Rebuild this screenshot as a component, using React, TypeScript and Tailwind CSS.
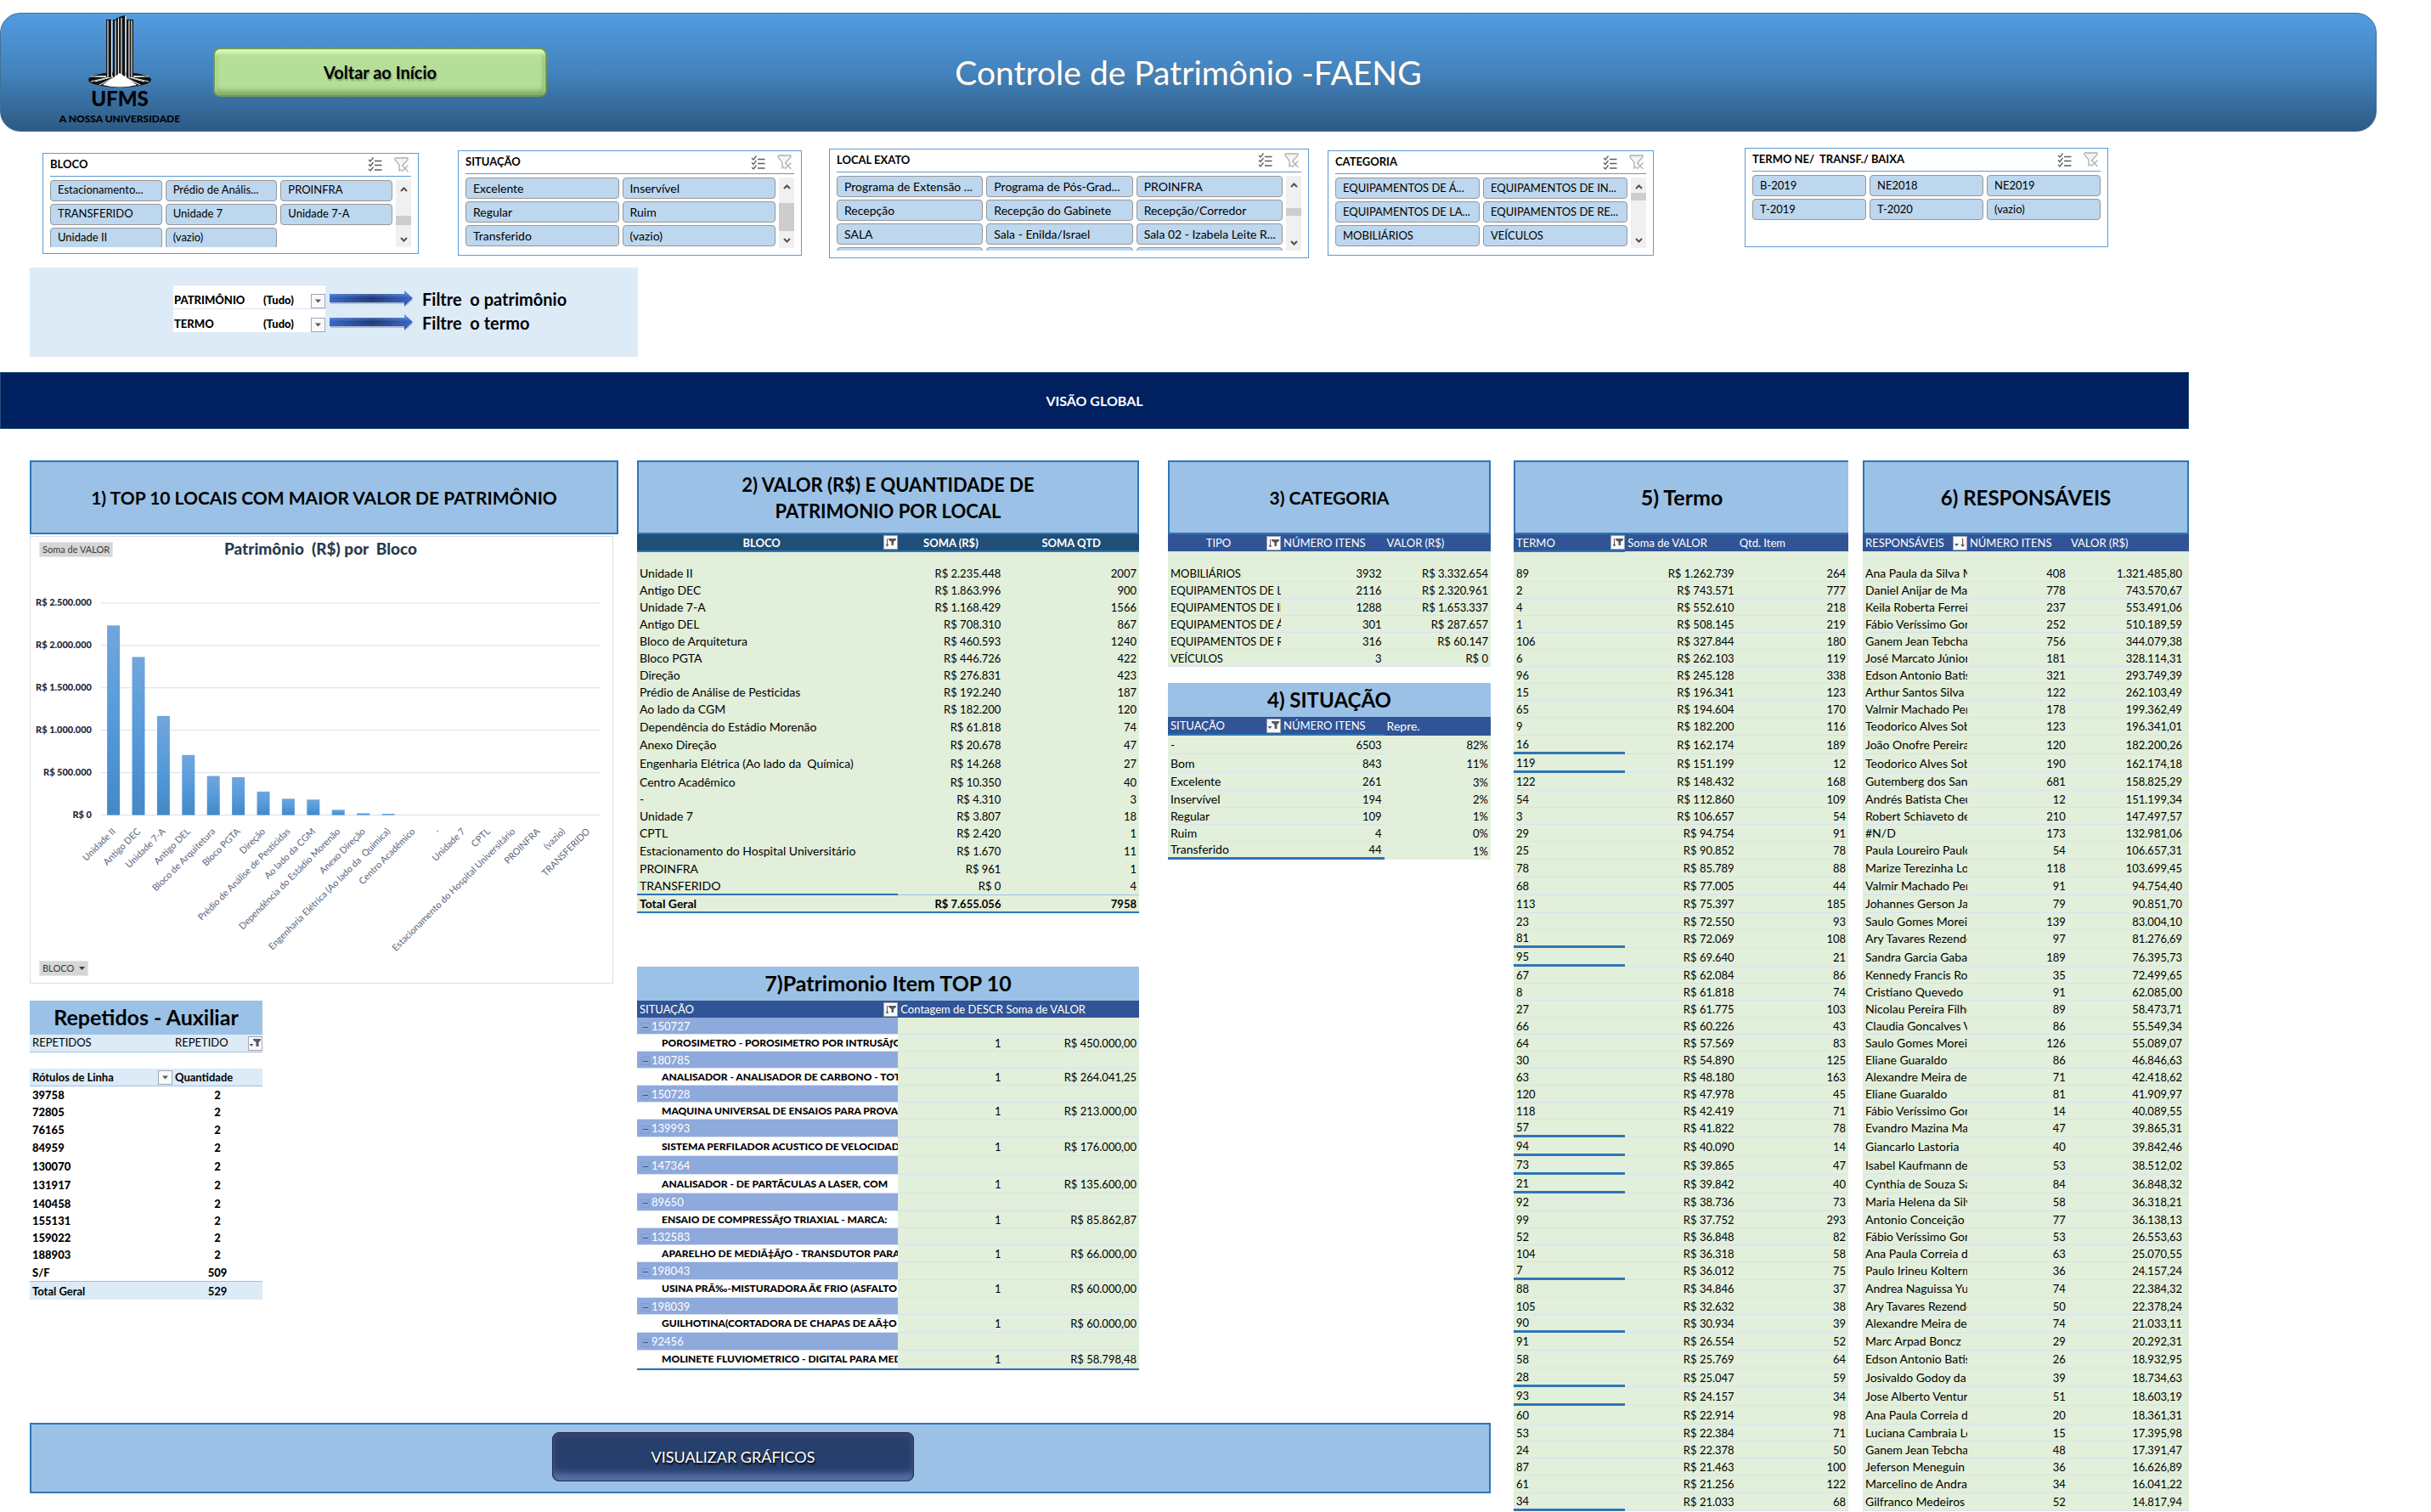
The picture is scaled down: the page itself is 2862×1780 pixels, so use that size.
import React from "react";

const heights: Record<number, string> = {
  15: "h-[15px]",
  20: "h-5",
  21: "h-[21px]",
  22: "h-[22px]",
};

const sheetRows = [
  20, 20, 20, 20, 20, 20, 20, 20, 20, 21, 22, 22, 21, 20, 20, 20, 21, 21, 21, 21, 20, 21, 22, 20, 20, 20, 20, 20, 20,
  20, 20, 20, 21, 22, 22, 22, 21, 20, 20, 20, 21, 21, 20, 21, 21, 21, 22, 22, 22, 20, 20, 20, 21, 21,
];

const blocos: [string, string, string][] = [
  ["Unidade II", "R$ 2.235.448", "2007"],
  ["Antigo DEC", "R$ 1.863.996", "900"],
  ["Unidade 7-A", "R$ 1.168.429", "1566"],
  ["Antigo DEL", "R$ 708.310", "867"],
  ["Bloco de Arquitetura", "R$ 460.593", "1240"],
  ["Bloco PGTA", "R$ 446.726", "422"],
  ["Direção", "R$ 276.831", "423"],
  ["Prédio de Análise de Pesticidas", "R$ 192.240", "187"],
  ["Ao lado da CGM", "R$ 182.200", "120"],
  ["Dependência do Estádio Morenão", "R$ 61.818", "74"],
  ["Anexo Direção", "R$ 20.678", "47"],
  ["Engenharia Elétrica (Ao lado da  Química)", "R$ 14.268", "27"],
  ["Centro Acadêmico", "R$ 10.350", "40"],
  ["-", "R$ 4.310", "3"],
  ["Unidade 7", "R$ 3.807", "18"],
  ["CPTL", "R$ 2.420", "1"],
  ["Estacionamento do Hospital Universitário", "R$ 1.670", "11"],
  ["PROINFRA", "R$ 961", "1"],
  ["TRANSFERIDO", "R$ 0", "4"],
];

const categorias: [string, string, string][] = [
  ["MOBILIÁRIOS", "3932", "R$ 3.332.654"],
  ["EQUIPAMENTOS DE LABORATÓRIO", "2116", "R$ 2.320.961"],
  ["EQUIPAMENTOS DE INFORMÁTICA", "1288", "R$ 1.653.337"],
  ["EQUIPAMENTOS DE ÁUDIO", "301", "R$ 287.657"],
  ["EQUIPAMENTOS DE REFRIGERAÇÃO", "316", "R$ 60.147"],
  ["VEÍCULOS", "3", "R$ 0"],
];

const situacoes: [string, string, string][] = [
  ["-", "6503", "82%"],
  ["Bom", "843", "11%"],
  ["Excelente", "261", "3%"],
  ["Inservível", "194", "2%"],
  ["Regular", "109", "1%"],
  ["Ruim", "4", "0%"],
  ["Transferido", "44", "1%"],
];

const termos: [string, string, string][] = [
  ["89", "1.262.739", "264"], ["2", "743.571", "777"], ["4", "552.610", "218"], ["1", "508.145", "219"],
  ["106", "327.844", "180"], ["6", "262.103", "119"], ["96", "245.128", "338"], ["15", "196.341", "123"],
  ["65", "194.604", "170"], ["9", "182.200", "116"], ["16", "162.174", "189"], ["119", "151.199", "12"],
  ["122", "148.432", "168"], ["54", "112.860", "109"], ["3", "106.657", "54"], ["29", "94.754", "91"],
  ["25", "90.852", "78"], ["78", "85.789", "88"], ["68", "77.005", "44"], ["113", "75.397", "185"],
  ["23", "72.550", "93"], ["81", "72.069", "108"], ["95", "69.640", "21"], ["67", "62.084", "86"],
  ["8", "61.818", "74"], ["27", "61.775", "103"], ["66", "60.226", "43"], ["64", "57.569", "83"],
  ["30", "54.890", "125"], ["63", "48.180", "163"], ["120", "47.978", "45"], ["118", "42.419", "71"],
  ["57", "41.822", "78"], ["94", "40.090", "14"], ["73", "39.865", "47"], ["21", "39.842", "40"],
  ["92", "38.736", "73"], ["99", "37.752", "293"], ["52", "36.848", "82"], ["104", "36.318", "58"],
  ["7", "36.012", "75"], ["88", "34.846", "37"], ["105", "32.632", "38"], ["90", "30.934", "39"],
  ["91", "26.554", "52"], ["58", "25.769", "64"], ["28", "25.047", "59"], ["93", "24.157", "34"],
  ["60", "22.914", "98"], ["53", "22.384", "71"], ["24", "22.378", "50"], ["87", "21.463", "100"],
  ["61", "21.256", "122"], ["34", "21.033", "68"],
];
const markedTermos = new Set(["16", "119", "81", "95", "57", "94", "73", "21", "7", "90", "28", "93", "34"]);

const responsaveis: [string, string, string][] = [
  ["Ana Paula da Silva Mendes", "408", "1.321.485,80"],
  ["Daniel Anijar de Matos", "778", "743.570,67"],
  ["Keila Roberta Ferreira", "237", "553.491,06"],
  ["Fábio Veríssimo Gonçalves", "252", "510.189,59"],
  ["Ganem Jean Tebcharani", "756", "344.079,38"],
  ["José Marcato Júnior", "181", "328.114,31"],
  ["Edson Antonio Batista", "321", "293.749,39"],
  ["Arthur Santos Silva", "122", "262.103,49"],
  ["Valmir Machado Pereira", "178", "199.362,49"],
  ["Teodorico Alves Sobrinho", "123", "196.341,01"],
  ["João Onofre Pereira", "120", "182.200,26"],
  ["Teodorico Alves Sobrinho", "190", "162.174,18"],
  ["Gutemberg dos Santos", "681", "158.825,29"],
  ["Andrés Batista Cheung", "12", "151.199,34"],
  ["Robert Schiaveto de Souza", "210", "147.497,57"],
  ["#N/D", "173", "132.981,06"],
  ["Paula Loureiro Paulo", "54", "106.657,31"],
  ["Marize Terezinha Lopes", "118", "103.699,45"],
  ["Valmir Machado Pereira", "91", "94.754,40"],
  ["Johannes Gerson Janzen", "79", "90.851,70"],
  ["Saulo Gomes Moreira", "139", "83.004,10"],
  ["Ary Tavares Rezende", "97", "81.276,69"],
  ["Sandra Garcia Gabas", "189", "76.395,73"],
  ["Kennedy Francis Roche", "35", "72.499,65"],
  ["Cristiano Quevedo", "91", "62.085,00"],
  ["Nicolau Pereira Filho", "89", "58.473,71"],
  ["Claudia Goncalves Vianna", "86", "55.549,34"],
  ["Saulo Gomes Moreira", "126", "55.089,07"],
  ["Eliane Guaraldo", "86", "46.846,63"],
  ["Alexandre Meira de", "71", "42.418,62"],
  ["Eliane Guaraldo", "81", "41.909,97"],
  ["Fábio Veríssimo Gonçalves", "14", "40.089,55"],
  ["Evandro Mazina Martins", "47", "39.865,31"],
  ["Giancarlo Lastoria", "40", "39.842,46"],
  ["Isabel Kaufmann de", "53", "38.512,02"],
  ["Cynthia de Souza Santos", "84", "36.848,32"],
  ["Maria Helena da Silva", "58", "36.318,21"],
  ["Antonio Conceição", "77", "36.138,13"],
  ["Fábio Veríssimo Gonçalves", "53", "26.553,63"],
  ["Ana Paula Correia de", "63", "25.070,55"],
  ["Paulo Irineu Koltermann", "36", "24.157,24"],
  ["Andrea Naguissa Yuba", "74", "22.384,32"],
  ["Ary Tavares Rezende", "50", "22.378,24"],
  ["Alexandre Meira de", "74", "21.033,11"],
  ["Marc Arpad Boncz", "29", "20.292,31"],
  ["Edson Antonio Batista", "26", "18.932,95"],
  ["Josivaldo Godoy da", "39", "18.734,63"],
  ["Jose Alberto Ventura", "51", "18.603,19"],
  ["Ana Paula Correia de", "20", "18.361,31"],
  ["Luciana Cambraia Leite", "15", "17.395,98"],
  ["Ganem Jean Tebcharani", "48", "17.391,47"],
  ["Jeferson Meneguin", "36", "16.626,89"],
  ["Marcelino de Andrade", "34", "16.041,22"],
  ["Gilfranco Medeiros", "52", "14.817,94"],
];

const itens: [string, string, string][] = [
  ["150727", "POROSIMETRO - POROSIMETRO POR INTRUSÃƒO", "R$ 450.000,00"],
  ["180785", "ANALISADOR - ANALISADOR DE CARBONO - TOTAL", "R$ 264.041,25"],
  ["150728", "MAQUINA UNIVERSAL DE ENSAIOS PARA PROVAS", "R$ 213.000,00"],
  ["139993", "SISTEMA PERFILADOR ACUSTICO DE VELOCIDADE", "R$ 176.000,00"],
  ["147364", "ANALISADOR - DE PARTÃCULAS A LASER, COM", "R$ 135.600,00"],
  ["89650", "ENSAIO DE COMPRESSÃƒO TRIAXIAL - MARCA:", "R$ 85.862,87"],
  ["132583", "APARELHO DE MEDIÃ‡ÃƒO - TRANSDUTOR PARA", "R$ 66.000,00"],
  ["198043", "USINA PRÃ‰-MISTURADORA Ã€ FRIO (ASFALTO", "R$ 60.000,00"],
  ["198039", "GUILHOTINA(CORTADORA DE CHAPAS DE AÃ‡O", "R$ 60.000,00"],
  ["92456", "MOLINETE FLUVIOMETRICO - DIGITAL PARA MEDIR", "R$ 58.798,48"],
];

const repetidos: [string, string][] = [
  ["39758", "2"], ["72805", "2"], ["76165", "2"], ["84959", "2"], ["130070", "2"], ["131917", "2"],
  ["140458", "2"], ["155131", "2"], ["159022", "2"], ["188903", "2"], ["S/F", "509"],
];

const chartData: [string, number][] = [
  ["Unidade II", 2235448], ["Antigo DEC", 1863996], ["Unidade 7-A", 1168429], ["Antigo DEL", 708310],
  ["Bloco de Arquitetura", 460593], ["Bloco PGTA", 446726], ["Direção", 276831],
  ["Prédio de Análise de Pesticidas", 192240], ["Ao lado da CGM", 182200],
  ["Dependência do Estádio Morenão", 61818], ["Anexo Direção", 20678],
  ["Engenharia Elétrica (Ao lado da  Química)", 14268], ["Centro Acadêmico", 0], ["-", 0], ["Unidade 7", 0],
  ["CPTL", 0], ["Estacionamento do Hospital Universitário", 0], ["PROINFRA", 0], ["(vazio)", 0], ["TRANSFERIDO", 0],
];

function MultiSelectIcon() {
  return (
    <svg width="17" height="17" viewBox="0 0 17 17" fill="none" stroke="#5f5f5f" strokeWidth="1.3">
      <path d="M1 3l2 2 3.500-4.500M1 8.500l2 2 3.500-4.500M1 14l2 2 3.500-4.500M8 4.500h8.500M8 9.500h8.500M8 15h8.500" />
    </svg>
  );
}

function ClearFilterIcon() {
  return (
    <svg width="17" height="18" viewBox="0 0 17 18" fill="none" stroke="#b0b0b0" strokeWidth="1.3">
      <path d="M1 1h15v2l-5.500 6v1M1 1v2l5 6v7l3-1.500" fill="#f3f3f3" />
      <path d="M9 9.500l7.500 7.500M16.500 9.500L9 17" />
    </svg>
  );
}

function FilterButton({ kind, label }: { kind: "sort" | "funnel" | "down" | "arrow"; label: string }) {
  return (
    <button
      type="button"
      aria-label={label}
      className="flex h-[17px] w-[17px] shrink-0 items-center justify-center border border-[#a6a6b0] bg-[#f8f9fc]"
    >
      <svg width="15" height="15" viewBox="0 0 15 15" fill="#595959" stroke="none">
        {kind === "sort" && <path d="M3 3h1v7h1.500L3.500 12.500 1.500 10H3zM5 3h9v1.500L11 7v4H8.500V7L5 4.500z" />}
        {kind === "funnel" && <path d="M0.500 8h5L3 11zM5 2h9v1.500L11.500 6v5H8.500V6L5 3.500z" />}
        {kind === "down" && <path d="M1 8h5L3.500 11zM10 2h1.200v7H13l-2.400 3L8.200 9H10z" />}
        {kind === "arrow" && <path d="M4 5.500h7L7.500 9.500z" />}
      </svg>
    </button>
  );
}

type SlicerProps = {
  title: string;
  items: string[];
  gridClass: string;
  className: string;
  listClass: string;
  scroll?: { spacer: string; thumb: string };
};

function Slicer({ title, items, gridClass, className, listClass, scroll }: SlicerProps) {
  return (
    <section className={`min-w-0 grow border border-[#5b9bd5] bg-white px-2 ${className}`}>
      <header className="flex h-[27px] items-center justify-between border-b border-[#5b9bd5]">
        <h2 className="text-[13px] font-bold whitespace-pre">{title}</h2>
        <div className="flex gap-3.5 pr-[3px]">
          <button type="button" aria-label={`Seleção múltipla ${title}`}>
            <MultiSelectIcon />
          </button>
          <button type="button" aria-label={`Limpar filtro ${title}`}>
            <ClearFilterIcon />
          </button>
        </div>
      </header>
      <div className={`mt-1 flex gap-1 overflow-hidden ${listClass}`}>
        <div className={`grid min-w-0 grow auto-rows-[25px] gap-x-1 gap-y-[3px] ${gridClass}`}>
          {items.map((item, i) => (
            <button
              type="button"
              key={i}
              className="truncate rounded-sm border border-[#979797] bg-[#bdd7ee] pr-1 pl-2 text-left"
            >
              {item}
            </button>
          ))}
        </div>
        {scroll && (
          <div className="flex w-[18px] shrink-0 flex-col items-center bg-[#f0f0f0] pt-2 pb-1.5">
            <svg width="9" height="6" viewBox="0 0 9 6" fill="none" stroke="#505050" strokeWidth="2">
              <path d="M1 5l3.500-3.500L8 5" />
            </svg>
            <div className={`flex min-h-0 w-full grow flex-col ${scroll.spacer}`}>
              <div className={`w-full bg-[#cdcdcd] ${scroll.thumb}`} />
            </div>
            <svg width="9" height="6" viewBox="0 0 9 6" fill="none" stroke="#505050" strokeWidth="2">
              <path d="M1 1l3.500 3.500L8 1" />
            </svg>
          </div>
        )}
      </div>
    </section>
  );
}

function Logo() {
  return (
    <div className="flex w-[140px] flex-col items-center text-black">
      <svg width="76" height="86" viewBox="0 0 76 86">
        <ellipse cx="38" cy="76" rx="37" ry="9" fill="#111" />
        <g stroke="#e8e8e8" strokeWidth="1.200">
          {[-34, -29, -24, -19, 19, 24, 29, 34].map((x) => (
            <path key={x} d={`M38 70L${38 + x} ${76 + (Math.abs(x) > 28 ? 2 : 6)}M38 72L${38 + x} 72`} />
          ))}
        </g>
        <path d="M22 5h6v68h-6zM30 5h4V3h2v70h-6zM37 2l7-2v73h-7zM46 5h8v68h-8z" fill="#111" />
        <path d="M24 6v67M28.500 6v67M33 6v67M36.500 4v69M40 3v70M45 1v72M49 6v67M52 6v67" stroke="#f2f2f2" strokeWidth="1.200" />
        <path d="M38 68L18 82q20 5 40 0z" fill="#fff" />
      </svg>
      <span className="text-2xl leading-6 font-black">UFMS</span>
      <span className="text-[12px] leading-6 font-black whitespace-nowrap">A NOSSA UNIVERSIDADE</span>
    </div>
  );
}

function FilterArrow() {
  return (
    <svg width="100" height="24" viewBox="0 0 100 24" className="shrink-0">
      <defs>
        <linearGradient id="shaft" x1="0" x2="1">
          <stop offset="0" stopColor="#3565c8" />
          <stop offset="0.5" stopColor="#1b3672" />
          <stop offset="1" stopColor="#3565c8" />
        </linearGradient>
        <linearGradient id="shine" x1="0" x2="0" y1="0" y2="1">
          <stop offset="0" stopColor="#8fb0f5" stopOpacity="0.800" />
          <stop offset="0.500" stopColor="#8fb0f5" stopOpacity="0" />
          <stop offset="1" stopColor="#0b1c48" stopOpacity="0.500" />
        </linearGradient>
      </defs>
      <path d="M2 8h87V3l10 10-10 9v-4H2z" fill="#7f93b8" opacity="0.500" />
      <path d="M1 6h88V2l10 9-10 9v-4H1z" fill="url(#shaft)" />
      <path d="M1 6h88V2l10 9-10 9v-4H1z" fill="url(#shine)" />
    </svg>
  );
}

function FieldFilter({ id, name, hint }: { id: string; name: string; hint: string }) {
  return (
    <div className="flex h-[28px] items-end">
      <div className="flex h-full w-[179px] items-end border-t border-[#d9e1f2] bg-white pl-px">
        <label htmlFor={id} className="w-[105px] text-[13px] font-black">
          {name}
        </label>
        <select id={id} className="w-[56px] appearance-none bg-transparent text-[13px] font-black">
          <option>(Tudo)</option>
        </select>
        <FilterButton kind="arrow" label={`Abrir ${name}`} />
      </div>
      <div className="ml-1 flex h-[22px] items-center gap-2.5">
        <FilterArrow />
        <span className="text-xl leading-6 font-bold whitespace-pre">{hint}</span>
      </div>
    </div>
  );
}

function Chart() {
  const step = 589 / chartData.length;
  return (
    <figure className="relative mt-0.5 mr-1.5 border border-[#d9dfe8] bg-white">
      <svg viewBox="0 0 686 526" className="block w-full" fontFamily="Lato, sans-serif">
        <defs>
          <linearGradient id="bar" x1="0" x2="0" y1="0" y2="1">
            <stop offset="0" stopColor="#71a6db" />
            <stop offset="0.500" stopColor="#559bdb" />
            <stop offset="1" stopColor="#4389c8" />
          </linearGradient>
        </defs>
        <text x="342" y="21" textAnchor="middle" fontSize="19" fontWeight="900" fill="#2c394d" xmlSpace="preserve">
          Patrimônio  (R$) por  Bloco
        </text>
        {["2.500.000", "2.000.000", "1.500.000", "1.000.000", "500.000", "0"].map((v, i) => (
          <g key={v}>
            <path d={`M83 ${78 + i * 50}h589`} stroke="#d9dfe8" />
            <text x="72" y={81 + i * 50} textAnchor="end" fontSize="11" fontWeight="900" fill="#1e2a3d">
              R$ {v}
            </text>
          </g>
        ))}
        {chartData.map(([name, value], i) => {
          const cx = 83 + step * (i + 0.5);
          const h = (value / 2500000) * 250;
          return (
            <g key={name}>
              <rect x={cx - 7.5} y={328 - h} width="15" height={h} fill="url(#bar)" />
              <text
                transform={`translate(${cx + 3} 348) rotate(-45)`}
                textAnchor="end"
                fontSize="11"
                fill="#5b6780"
                xmlSpace="preserve"
              >
                {name}
              </text>
            </g>
          );
        })}
      </svg>
      <button
        type="button"
        className="absolute top-1.5 left-2.5 h-[18px] border border-[#e6e6e6] bg-[#d6d6d6] px-[3px] text-[11px] leading-4 text-[#3a3a3a]"
      >
        Soma de VALOR
      </button>
      <button
        type="button"
        className="absolute bottom-2 left-2.5 flex h-[18px] items-center gap-1.5 border border-[#e6e6e6] bg-[#d6d6d6] px-[3px] text-[11px] leading-4 text-[#3a3a3a]"
      >
        BLOCO
        <svg width="7" height="4" viewBox="0 0 7 4" fill="#3a3a3a">
          <path d="M0 0h7L3.500 4z" />
        </svg>
      </button>
    </figure>
  );
}

const cell = "overflow-hidden px-[3px] py-0 whitespace-pre";
const tableBase = "w-full table-fixed border-separate border-spacing-0 text-[13px] leading-4";

function HeadLabel({ children, kind, center }: { children: string; kind: "sort" | "funnel" | "down"; center?: boolean }) {
  return (
    <span className="flex items-center">
      <span className={center ? "grow text-center" : "grow"}>{children}</span>
      <FilterButton kind={kind} label={`Filtrar ${children}`} />
    </span>
  );
}

function BigTitle({ children, className }: { children: React.ReactNode; className: string }) {
  return (
    <h2
      className={`flex h-[87px] items-center justify-center border-2 border-[#2e75b6] bg-[#9bc2e6] text-center font-bold ${className}`}
    >
      {children}
    </h2>
  );
}

function BlocoTable() {
  return (
    <table className={tableBase}>
      <colgroup>
        <col className="w-[52%]" />
        <col className="w-[21%]" />
        <col className="w-[27%]" />
      </colgroup>
      <thead>
        <tr className="h-[21px] bg-[#1f4e78] text-white">
          <th className="border-b-2 border-[#2e75b6] py-0 pr-0 pl-[3px]">
            <HeadLabel kind="sort" center>
              BLOCO
            </HeadLabel>
          </th>
          <th className={`border-b-2 border-[#2e75b6] ${cell}`}>SOMA (R$)</th>
          <th className={`border-b-2 border-[#2e75b6] ${cell}`}>SOMA QTD</th>
        </tr>
      </thead>
      <tbody className="bg-[#e2efda]">
        <tr className={heights[15]}>
          <td colSpan={3} />
        </tr>
        {blocos.map(([a, b, c], i) => {
          const last = i === blocos.length - 1;
          return (
            <tr key={a} className={heights[sheetRows[i]]}>
              <td className={`${cell} text-[14px] leading-4 ${last ? "border-b-2 border-[#2e75b6]" : ""}`}>{a}</td>
              <td className={`${cell} text-right ${last ? "border-b border-[#9bc2e6]" : ""}`}>{b}</td>
              <td className={`${cell} text-right ${last ? "border-b border-[#9bc2e6]" : ""}`}>{c}</td>
            </tr>
          );
        })}
        <tr className="h-[21px] font-bold">
          <td className={`${cell} border-b-2 border-[#2e75b6] text-[14px] leading-4`}>Total Geral</td>
          <td className={`${cell} border-b-2 border-[#2e75b6] text-right`}>R$ 7.655.056</td>
          <td className={`${cell} border-b-2 border-[#2e75b6] text-right`}>7958</td>
        </tr>
      </tbody>
    </table>
  );
}

function ItemTable() {
  return (
    <section>
      <h2 className="flex h-10 items-center justify-center bg-[#9bc2e6] text-[25px] font-bold">
        7)Patrimonio Item TOP 10
      </h2>
      <table className={`${tableBase} border-b-2 border-[#2e75b6]`}>
        <colgroup>
          <col className="w-[52%]" />
          <col className="w-[21%]" />
          <col className="w-[27%]" />
        </colgroup>
        <thead>
          <tr className="h-5 bg-[#305496] text-left text-white">
            <th className="py-0 pr-0 pl-[3px] font-normal">
              <HeadLabel kind="sort">SITUAÇÃO</HeadLabel>
            </th>
            <th className={`${cell} font-normal`}>Contagem de DESCRIÇÃO</th>
            <th className={`${cell} font-normal`}>Soma de VALOR</th>
          </tr>
        </thead>
        <tbody>
          {itens.map(([code, name, value], i) => (
            <React.Fragment key={code}>
              <tr className={heights[sheetRows[26 + i * 2]]}>
                <td className={`${cell} border-b border-[#d9e1f2] bg-[#8ea9db] text-white`}>
                  <button
                    type="button"
                    aria-label={`Recolher ${code}`}
                    className="mr-0.5 ml-0.5 inline-flex h-2.5 w-2.5 items-center justify-center border border-[#7d9ad0] align-middle"
                  >
                    <span className="h-px w-1.5 bg-[#305496]" />
                  </button>
                  {code}
                </td>
                <td className="border-b border-[#d9e1f2] bg-[#e2efda]" />
                <td className="border-b border-[#d9e1f2] bg-[#e2efda]" />
              </tr>
              <tr className={heights[sheetRows[27 + i * 2]]}>
                <td className="overflow-hidden border-b border-[#d9e1f2] bg-white py-0 pl-[29px] text-[12px] leading-4 font-black whitespace-pre">
                  {name}
                </td>
                <td className={`${cell} border-b border-[#d9e1f2] bg-[#e2efda] text-right`}>1</td>
                <td className={`${cell} border-b border-[#d9e1f2] bg-[#e2efda] text-right`}>{value}</td>
              </tr>
            </React.Fragment>
          ))}
        </tbody>
      </table>
    </section>
  );
}

function CategoriaTable() {
  return (
    <table className={tableBase}>
      <colgroup>
        <col className="w-[35%]" />
        <col className="w-[32%]" />
        <col className="w-[33%]" />
      </colgroup>
      <thead>
        <tr className="h-[21px] bg-[#305496] text-left text-white">
          <th className="border-b border-[#d9e1f2] py-0 pr-0 pl-[3px] font-normal">
            <HeadLabel kind="sort" center>
              TIPO
            </HeadLabel>
          </th>
          <th className={`${cell} border-b border-[#d9e1f2] font-normal`}>NÚMERO ITENS</th>
          <th className={`${cell} border-b border-[#d9e1f2] font-normal`}>VALOR (R$)</th>
        </tr>
      </thead>
      <tbody className="bg-[#e2efda]">
        <tr className={heights[15]}>
          <td colSpan={3} />
        </tr>
        {categorias.map(([a, b, c], i) => (
          <tr key={a} className={heights[sheetRows[i]]}>
            <td className={`${cell} border-b border-[#d9e1f2]`}>{a}</td>
            <td className={`${cell} border-b border-[#d9e1f2] text-right`}>{b}</td>
            <td className={`${cell} border-b border-[#d9e1f2] text-right`}>{c}</td>
          </tr>
        ))}
      </tbody>
    </table>
  );
}

function SituacaoTable() {
  return (
    <section>
      <h2 className="flex h-10 items-center justify-center bg-[#9bc2e6] text-2xl font-bold">4) SITUAÇÃO</h2>
      <table className={tableBase}>
        <colgroup>
          <col className="w-[35%]" />
          <col className="w-[32%]" />
          <col className="w-[33%]" />
        </colgroup>
        <thead>
          <tr className="h-[22px] bg-[#305496] text-left text-white">
            <th className="border-b-2 border-[#2e75b6] py-0 pr-0 pl-[3px] font-normal">
              <HeadLabel kind="funnel">SITUAÇÃO</HeadLabel>
            </th>
            <th className={`${cell} border-b-2 border-[#2e75b6] font-normal`}>NÚMERO ITENS</th>
            <th className={`${cell} text-[14px] leading-4 font-normal`}>Repre.</th>
          </tr>
        </thead>
        <tbody className="bg-[#e2efda]">
          {situacoes.map(([a, b, c], i) => {
            const line = i === situacoes.length - 1 ? "border-b-3 border-[#2e75b6]" : "border-b border-[#d9e1f2]";
            return (
              <tr key={a} className={heights[sheetRows[i + 10]]}>
                <td className={`${cell} text-[14px] leading-4 ${line}`}>{a}</td>
                <td className={`${cell} text-right ${line}`}>{b}</td>
                <td className={`${cell} text-right`}>{c}</td>
              </tr>
            );
          })}
        </tbody>
      </table>
    </section>
  );
}

function TermoTable() {
  return (
    <section>
      <BigTitle className="border-r-0 text-[25px]">5) Termo</BigTitle>
      <table className={tableBase}>
        <thead>
          <tr className="h-[21px] bg-[#305496] text-left text-white">
            <th className="border-b-2 border-[#2e75b6] py-0 pr-0 pl-[3px] font-normal">
              <HeadLabel kind="sort">TERMO</HeadLabel>
            </th>
            <th className={`${cell} border-b border-[#d9e1f2] font-normal`}>Soma de VALOR</th>
            <th className={`${cell} border-b border-[#d9e1f2] font-normal`}>Qtd. Item</th>
          </tr>
        </thead>
        <tbody className="bg-[#e2efda]">
          <tr className={heights[15]}>
            <td colSpan={3} />
          </tr>
          {termos.map(([a, b, c], i) => (
            <tr key={a} className={heights[sheetRows[i]]}>
              <td className={`${cell} ${markedTermos.has(a) ? "border-b-3 border-[#2e75b6]" : "border-b border-[#d9e1f2]"}`}>
                {a}
              </td>
              <td className={`${cell} border-b border-[#d9e1f2] text-right`}>R$ {b}</td>
              <td className={`${cell} border-b border-[#d9e1f2] text-right`}>{c}</td>
            </tr>
          ))}
        </tbody>
      </table>
    </section>
  );
}

function ResponsaveisTable() {
  return (
    <section>
      <BigTitle className="text-2xl">6) RESPONSÁVEIS</BigTitle>
      <table className={tableBase}>
        <colgroup>
          <col className="w-[32%]" />
          <col className="w-[31%]" />
          <col className="w-[37%]" />
        </colgroup>
        <thead>
          <tr className="h-[21px] bg-[#305496] text-left text-white">
            <th className="border-b border-[#d9e1f2] py-0 pr-0 pl-[3px] font-normal">
              <HeadLabel kind="down">RESPONSÁVEIS</HeadLabel>
            </th>
            <th className={`${cell} border-b border-[#d9e1f2] font-normal`}>NÚMERO ITENS</th>
            <th className={`${cell} border-b border-[#d9e1f2] font-normal`}>VALOR (R$)</th>
          </tr>
        </thead>
        <tbody className="bg-[#e2efda]">
          <tr className={heights[15]}>
            <td colSpan={3} />
          </tr>
          {responsaveis.map(([a, b, c], i) => (
            <tr key={i} className={heights[sheetRows[i]]}>
              <td className={`${cell} border-b border-[#d9e1f2] text-[14px] leading-4`}>{a}</td>
              <td className={`${cell} border-b border-[#d9e1f2] text-right`}>{b}</td>
              <td className="overflow-hidden border-b border-[#d9e1f2] py-0 pr-2 text-right">{c}</td>
            </tr>
          ))}
        </tbody>
      </table>
    </section>
  );
}

function RepetidosTable() {
  return (
    <section className="mt-5 w-[274px]">
      <h2 className="flex h-10 items-center justify-center bg-[#9bc2e6] text-[25px] font-bold">Repetidos - Auxiliar</h2>
      <div className="flex h-[21px] items-center border-b border-[#9bc2e6] bg-[#ddebf7] pl-[3px] text-[13px]">
        <span className="w-[168px]">REPETIDOS</span>
        <span className="grow">REPETIDO</span>
        <FilterButton kind="funnel" label="Filtrar REPETIDOS" />
      </div>
      <table className={`mt-[19px] ${tableBase}`}>
        <colgroup>
          <col className="w-[168px]" />
          <col />
        </colgroup>
        <thead>
          <tr className="h-[21px] bg-[#ddebf7] text-left">
            <th className="border-b border-[#9bc2e6] py-0 pr-0 pl-[3px]">
              <span className="flex items-center justify-between">
                Rótulos de Linha
                <FilterButton kind="arrow" label="Abrir Rótulos de Linha" />
              </span>
            </th>
            <th className={`${cell} border-b border-[#9bc2e6]`}>Quantidade</th>
          </tr>
        </thead>
        <tbody className="font-black">
          {repetidos.map(([a, b], i) => (
            <tr key={a} className={heights[sheetRows[30 + i]]}>
              <td className={cell}>{a}</td>
              <td className={`${cell} text-center`}>{b}</td>
            </tr>
          ))}
          <tr className="h-[22px] bg-[#ddebf7] font-bold">
            <td className={`${cell} border-t border-[#9bc2e6]`}>Total Geral</td>
            <td className={`${cell} border-t border-[#9bc2e6] text-center`}>529</td>
          </tr>
        </tbody>
      </table>
    </section>
  );
}

export default function App() {
  return (
    <div className="w-full overflow-hidden bg-white pt-[15px] font-[Lato,sans-serif] text-black">
      <header className="mr-16 grid h-[140px] grid-cols-[1fr_auto_1fr] items-center rounded-3xl border border-[#41719c] bg-linear-to-b from-[#529ce0] via-[#4383bd] to-[#2d5a84]">
        <div className="flex items-center pl-[70px]">
          <Logo />
          <a
            href="#inicio"
            className="ml-10 flex h-[58px] w-[393px] items-center justify-center rounded-lg border-2 border-[#6f9a55] bg-[#b5df98] text-xl font-bold shadow-[inset_0_4px_5px_#e0ffc4,inset_0_-5px_6px_#7fa864,inset_-3px_0_3px_#8fb873,inset_3px_0_3px_#a5cf88] [text-shadow:1px_2px_2px_#7b9a68]"
          >
            Voltar ao Início
          </a>
        </div>
        <h1 className="text-[39px] text-white [text-shadow:0_1px_1px_#7a7a7a]">Controle de Patrimônio -FAENG</h1>
      </header>

      <div className="mt-[19px] flex h-[130px] items-center pr-[380px] pl-[50px]">
        <Slicer
          title="BLOCO"
          className="h-[119px] basis-[443px] text-[13px]"
          listClass="h-[79px]"
          gridClass="grid-cols-3"
          items={["Estacionamento...", "Prédio de Anális...", "PROINFRA", "TRANSFERIDO", "Unidade 7", "Unidade 7-A", "Unidade II", "(vazio)"]}
          scroll={{ spacer: "pt-7", thumb: "h-[11px]" }}
        />
        <Slicer
          title="SITUAÇÃO"
          className="ml-[46px] h-[124px] basis-[405px] text-[14px]"
          listClass="h-[83px]"
          gridClass="grid-cols-2"
          items={["Excelente", "Inservível", "Regular", "Ruim", "Transferido", "(vazio)"]}
          scroll={{ spacer: "pt-4", thumb: "h-[33px]" }}
        />
        <Slicer
          title="LOCAL EXATO"
          className="ml-8 h-[129px] basis-[565px] text-[14px]"
          listClass="h-[88px]"
          gridClass="grid-cols-3"
          items={["Programa de Extensão ...", "Programa de Pós-Grad...", "PROINFRA", "Recepção", "Recepção do Gabinete", "Recepção/Corredor", "SALA", "Sala - Enilda/Israel", "Sala 02 - Izabela Leite R...", "", "", ""]}
          scroll={{ spacer: "pt-6", thumb: "h-[9px]" }}
        />
        <Slicer
          title="CATEGORIA"
          className="ml-[22px] h-[124px] basis-[384px] text-[13px]"
          listClass="h-[83px]"
          gridClass="grid-cols-2"
          items={["EQUIPAMENTOS DE Á...", "EQUIPAMENTOS DE IN...", "EQUIPAMENTOS DE LA...", "EQUIPAMENTOS DE RE...", "MOBILIÁRIOS", "VEÍCULOS"]}
          scroll={{ spacer: "pt-1", thumb: "h-[9px]" }}
        />
        <Slicer
          title="TERMO NE/  TRANSF./ BAIXA"
          className="ml-[107px] h-[117px] basis-[428px] self-start text-[13px]"
          listClass="h-[83px]"
          gridClass="grid-cols-3"
          items={["B-2019", "NE2018", "NE2019", "T-2019", "T-2020", "(vazio)"]}
        />
      </div>

      <section className="mt-[11px] ml-[35px] h-[105px] w-[716px] bg-[#ddebf7] pt-5 pl-[169px]">
        <FieldFilter id="patrimonio" name="PATRIMÔNIO" hint="Filtre  o patrimônio" />
        <FieldFilter id="termo" name="TERMO" hint="Filtre  o termo" />
      </section>

      <div className="mt-[18px] mr-[285px] flex h-[67px] items-center justify-center border border-[#1f4e78] bg-[#002060] text-base font-bold text-white">
        VISÃO GLOBAL
      </div>

      <main className="mt-[37px] flex pr-[285px] pl-[35px]">
        <div className="flex flex-[1720] flex-col">
          <div className="grid grid-cols-[715fr_625fr_380fr]">
            <div className="min-w-0 pr-[22px]">
              <BigTitle className="text-[21px]">1) TOP 10 LOCAIS COM MAIOR VALOR DE PATRIMÔNIO</BigTitle>
              <Chart />
              <RepetidosTable />
            </div>
            <div className="min-w-0 pr-[34px]">
              <BigTitle className="text-[22px] leading-[31px]">
                <span className="w-[360px]">2) VALOR (R$) E QUANTIDADE DE PATRIMONIO POR LOCAL</span>
              </BigTitle>
              <BlocoTable />
              <div className="mt-[63px]">
                <ItemTable />
              </div>
            </div>
            <div className="min-w-0">
              <BigTitle className="text-[21px]">3) CATEGORIA</BigTitle>
              <CategoriaTable />
              <div className="mt-[19px]">
                <SituacaoTable />
              </div>
            </div>
          </div>
          <div className="mt-[62px] flex h-[83px] items-center justify-center border-2 border-[#2e75b6] bg-[#9bc2e6] pr-16 pb-1">
            <a
              href="#graficos"
              className="flex h-[58px] w-[426px] items-center justify-center rounded-lg border border-[#1b2f57] bg-[#263f6d] text-lg text-white shadow-[inset_0_4px_6px_#3b4a6b,inset_0_-8px_8px_#5b74a8,inset_-3px_0_4px_#1a2b50,inset_3px_0_4px_#1a2b50] [text-shadow:1px_2px_2px_#000]"
            >
              VISUALIZAR GRÁFICOS
            </a>
          </div>
        </div>
        <div className="ml-[27px] min-w-0 flex-[394]">
          <TermoTable />
        </div>
        <div className="ml-[17px] min-w-0 flex-[384]">
          <ResponsaveisTable />
        </div>
      </main>
    </div>
  );
}
